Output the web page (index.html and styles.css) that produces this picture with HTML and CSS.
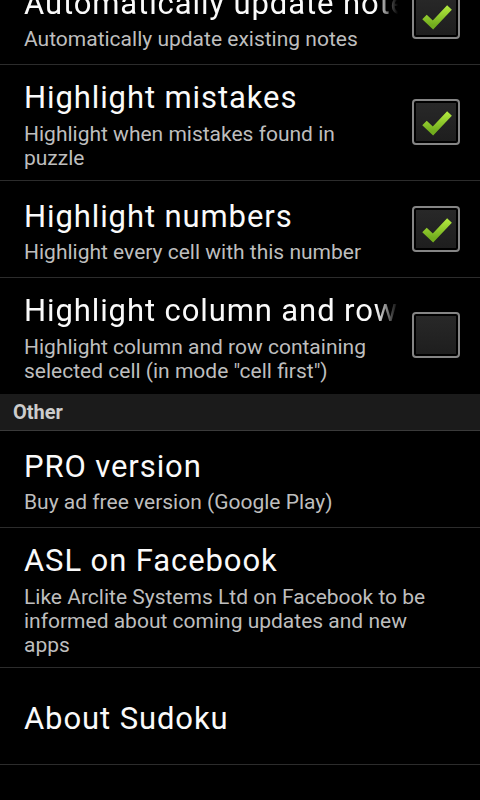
FILE: index.html
```html
<!DOCTYPE html>
<html>
<head>
<meta charset="utf-8">
<link rel="stylesheet" href="styles.css">
</head>
<body>
<svg width="0" height="0" class="defs">
  <defs>
    <linearGradient id="fill" x1="0" y1="0" x2="0" y2="1">
      <stop offset="0" stop-color="#282828"/>
      <stop offset="1" stop-color="#1e1e1e"/>
    </linearGradient>
    <linearGradient id="tick" x1="0" y1="0" x2="0" y2="1">
      <stop offset="0" stop-color="#aee63c"/>
      <stop offset="1" stop-color="#72ad1e"/>
    </linearGradient>
  </defs>
</svg>
<div class="screen">
  <div class="list">
    <div class="pref">
      <div class="text">
        <div class="title fade">Automatically update notes</div>
        <div class="summary">Automatically update existing notes</div>
      </div>
      <svg class="check" viewBox="0 0 48 46" width="48" height="46"><rect x="1" y="1" width="46" height="44" rx="3" fill="#000" stroke="#858585" stroke-width="2"/><rect x="4" y="4" width="40" height="38" fill="url(#fill)"/><polyline points="12.5,24 21,32 37.5,14.5" fill="none" stroke="url(#tick)" stroke-width="6.5" stroke-linecap="butt" stroke-linejoin="miter"/></svg>
    </div>
    <div class="pref">
      <div class="text">
        <div class="title">Highlight mistakes</div>
        <div class="summary">Highlight when mistakes found in puzzle</div>
      </div>
      <svg class="check" viewBox="0 0 48 46" width="48" height="46"><rect x="1" y="1" width="46" height="44" rx="3" fill="#000" stroke="#858585" stroke-width="2"/><rect x="4" y="4" width="40" height="38" fill="url(#fill)"/><polyline points="12.5,24 21,32 37.5,14.5" fill="none" stroke="url(#tick)" stroke-width="6.5" stroke-linecap="butt" stroke-linejoin="miter"/></svg>
    </div>
    <div class="pref">
      <div class="text">
        <div class="title">Highlight numbers</div>
        <div class="summary">Highlight every cell with this number</div>
      </div>
      <svg class="check" viewBox="0 0 48 46" width="48" height="46"><rect x="1" y="1" width="46" height="44" rx="3" fill="#000" stroke="#858585" stroke-width="2"/><rect x="4" y="4" width="40" height="38" fill="url(#fill)"/><polyline points="12.5,24 21,32 37.5,14.5" fill="none" stroke="url(#tick)" stroke-width="6.5" stroke-linecap="butt" stroke-linejoin="miter"/></svg>
    </div>
    <div class="pref last">
      <div class="text">
        <div class="title fade">Highlight column and row</div>
        <div class="summary">Highlight column and row containing selected cell (in mode "cell first")</div>
      </div>
      <svg class="check" viewBox="0 0 48 46" width="48" height="46"><rect x="1" y="1" width="46" height="44" rx="3" fill="#000" stroke="#858585" stroke-width="2"/><rect x="4" y="4" width="40" height="38" fill="url(#fill)"/></svg>
    </div>
    <div class="category">Other</div>
    <div class="pref plain">
      <div class="text">
        <div class="title">PRO version</div>
        <div class="summary">Buy ad free version (Google Play)</div>
      </div>
    </div>
    <div class="pref plain">
      <div class="text">
        <div class="title">ASL on Facebook</div>
        <div class="summary">Like Arclite Systems Ltd on Facebook to be informed about coming updates and new apps</div>
      </div>
    </div>
    <div class="pref plain">
      <div class="text">
        <div class="title">About Sudoku</div>
      </div>
    </div>
  </div>
</div>
</body>
</html>
```
FILE: styles.css
```css
html, body {
  margin: 0;
  padding: 0;
  background: #000;
}
body {
  width: 480px;
  height: 800px;
  overflow: hidden;
  font-family: Roboto, "Noto Sans", sans-serif;
}
.defs {
  position: absolute;
  width: 0;
  height: 0;
}
.screen {
  width: 480px;
  height: 800px;
  overflow: hidden;
}
.list {
  margin-top: -32px;
  display: flex;
  flex-direction: column;
}
.pref {
  display: flex;
  align-items: center;
  min-height: 96px;
  border-bottom: 1px solid #2c2c2c;
  padding-left: 24px;
}
.pref.last {
  border-bottom-color: transparent;
}
.pref.plain {
  padding-right: 24px;
}
.text {
  flex: 1;
  min-width: 0;
  padding: 15.4px 0 10.2px 0;
}
.title {
  font-size: 31px;
  line-height: 36px;
  letter-spacing: 0.9px;
  color: #fafafa;
  white-space: nowrap;
  overflow: hidden;
}
.title.fade {
  -webkit-mask-image: linear-gradient(to right, #000 calc(100% - 22px), transparent);
  mask-image: linear-gradient(to right, #000 calc(100% - 22px), transparent);
}
.summary {
  margin-top: 5.4px;
  font-size: 21px;
  line-height: 24px;
  color: #bebebe;
}
.check {
  flex: none;
  margin-left: 14px;
  margin-right: 20px;
  display: block;
}
.category {
  height: 36px;
  line-height: 36px;
  background: #1b1b1b;
  border-bottom: 1px solid #3a3a3a;
  padding-left: 13px;
  font-size: 20px;
  font-weight: bold;
  color: #cccccc;
}
```
